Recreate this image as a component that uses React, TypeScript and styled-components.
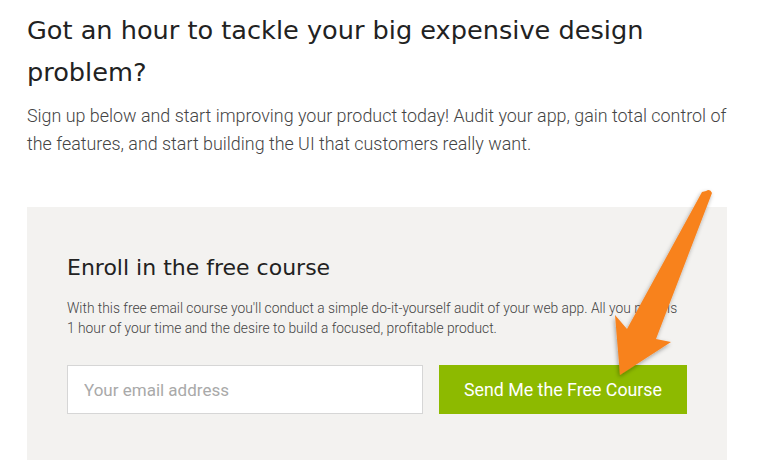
import styled, { createGlobalStyle } from 'styled-components'

const GlobalStyle = createGlobalStyle`
  body {
    margin: 0;
    background: #ffffff;
    font-family: Roboto, 'Liberation Sans', sans-serif;
  }
`

function App() {
  return (
    <>
      <GlobalStyle />
      <Page>
        <Heading>Got an hour to tackle your big expensive design problem?</Heading>
        <Lead>
          Sign up below and start improving your product today! Audit your app, gain total control of
          the features, and start building the UI that customers really want.
        </Lead>
        <EnrollBox>
          <EnrollTitle>Enroll in the free course</EnrollTitle>
          <EnrollText>
            With this free email course you'll conduct a simple do-it-yourself audit of your web app. All you need is
            <br />1 hour of your time and the desire to build a focused, profitable product.
          </EnrollText>
          <Form onSubmit={e => e.preventDefault()}>
            <EmailInput type="email" placeholder="Your email address" />
            <SubmitButton type="submit">Send Me the Free Course</SubmitButton>
          </Form>
          <Arrow width="120" height="200" viewBox="0 0 120 200">
            <defs>
              <filter id="arrowShadow" x="-30%" y="-30%" width="160%" height="160%">
                <feDropShadow dx="-1" dy="2" stdDeviation="2" floodColor="#000" floodOpacity="0.35" />
              </filter>
            </defs>
            <path
              d="M108 4 Q112 1 114 6 L58 152 L73 155 L22 188 L17 128 L29 142 L104 5 Z"
              fill="#f8821e"
              filter="url(#arrowShadow)"
            />
          </Arrow>
        </EnrollBox>
      </Page>
    </>
  )
}

export default App

const Page = styled.main`
  width: 700px;
  padding: 9px 0 0 27px;
`

const Heading = styled.h1`
  margin: 0;
  font-family: 'DejaVu Sans', 'Noto Sans', sans-serif;
  font-weight: 400;
  font-size: 25.6px;
  line-height: 42px;
  color: #222222;
`

const Lead = styled.p`
  margin: 9px 0 0;
  font-size: 17.9px;
  font-weight: 300;
  line-height: 28px;
  color: #444444;
`

const EnrollBox = styled.section`
  position: relative;
  margin-top: 49px;
  padding: 46px 40px 46px;
  background: #f3f2f0;
`

const EnrollTitle = styled.h2`
  margin: 0;
  font-family: 'DejaVu Sans', 'Noto Sans', sans-serif;
  font-weight: 400;
  font-size: 22px;
  line-height: 30px;
  color: #222222;
`

const EnrollText = styled.p`
  margin: 15px 0 0;
  font-size: 13.8px;
  font-weight: 300;
  line-height: 20px;
  color: #444444;
  white-space: nowrap;
`

const Form = styled.form`
  display: flex;
  gap: 16px;
  margin-top: 27px;
`

const EmailInput = styled.input`
  flex: 1;
  height: 49px;
  box-sizing: border-box;
  border: 1px solid #d6d6d6;
  background: #ffffff;
  padding: 0 16px;
  font-family: Roboto, 'Liberation Sans', sans-serif;
  font-size: 17px;
  color: #333333;
  outline: none;

  &::placeholder {
    color: #a9a9a9;
  }
`

const SubmitButton = styled.button`
  width: 248px;
  height: 49px;
  border: none;
  background: #8dba00;
  color: #ffffff;
  font-family: Roboto, 'Liberation Sans', sans-serif;
  font-size: 17.8px;
  cursor: pointer;
`

const Arrow = styled.svg`
  position: absolute;
  left: 571px;
  top: -20px;
  pointer-events: none;
`
